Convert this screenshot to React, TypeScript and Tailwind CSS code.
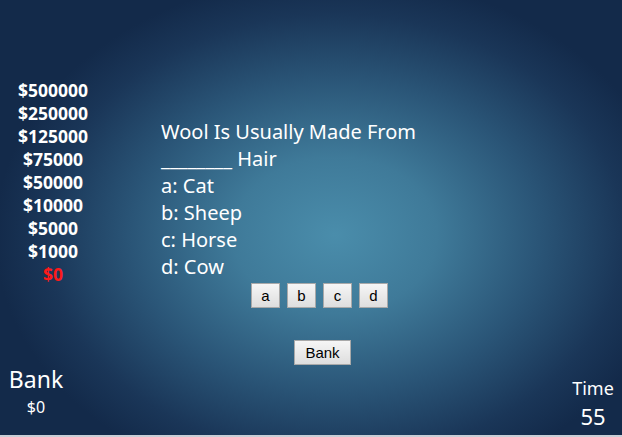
import React from "react";

const amounts = ["$500000", "$250000", "$125000", "$75000", "$50000", "$10000", "$5000", "$1000"];

function Btn({ children, className = "" }: { children: React.ReactNode; className?: string }) {
  return (
    <button
      className={
        "h-[25px] border border-[#a9a9a9] bg-gradient-to-b from-[#f6f6f6] to-[#dedede] text-[15px] leading-none text-black font-['Liberation_Sans',Arial,sans-serif] " +
        className
      }
    >
      {children}
    </button>
  );
}

export default function App() {
  return (
    <div
      className="relative w-[622px] h-[437px] overflow-hidden text-white font-['Noto_Sans',sans-serif] flex flex-col border-b-2 border-[#c9ced6]"
      style={{
        background:
          "radial-gradient(ellipse 340px 260px at 335px 235px, #4a8dab 0%, #3f7a99 30%, #2a5577 60%, #1a3658 85%, #132a4a 100%)",
      }}
    >
      <div className="flex pt-[79px]">
        <div className="w-[106px] flex flex-col items-center text-[17.5px] font-bold leading-[23px]">
          {amounts.map((a) => (
            <div key={a}>{a}</div>
          ))}
          <div className="text-[#ff1a1a]">$0</div>
        </div>
        <div className="ml-[55px] mt-[39px] flex flex-col text-[20px] leading-[27px]">
          <div>Wool Is Usually Made From</div>
          <div>________ Hair</div>
          <div>a: Cat</div>
          <div>b: Sheep</div>
          <div>c: Horse</div>
          <div>d: Cow</div>
        </div>
      </div>
      <div className="flex gap-[7px] ml-[251px] mt-[-3px]">
        <Btn className="w-[29px]">a</Btn>
        <Btn className="w-[29px]">b</Btn>
        <Btn className="w-[29px]">c</Btn>
        <Btn className="w-[29px]">d</Btn>
      </div>
      <div className="flex ml-[294px] mt-[32px]">
        <Btn className="w-[57px]">Bank</Btn>
      </div>
      <div className="flex justify-between items-end flex-1">
        <div className="w-[72px] flex flex-col items-center pb-[17px]">
          <div className="text-[23px] leading-[28px] mb-[2px]">Bank</div>
          <div className="text-[16px] leading-[24px]">$0</div>
        </div>
        <div className="w-[58px] flex flex-col items-center pb-[5px]">
          <div className="text-[18px] leading-[26px]">Time</div>
          <div className="text-[22px] leading-[30px]">55</div>
        </div>
      </div>
    </div>
  );
}
